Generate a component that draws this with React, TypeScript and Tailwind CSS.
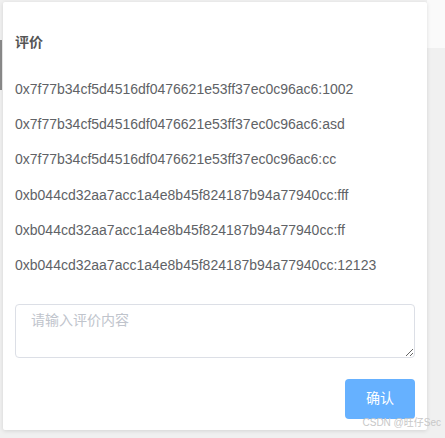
const ITEMS = [
  '0x7f77b34cf5d4516df0476621e53ff37ec0c96ac6:1002',
  '0x7f77b34cf5d4516df0476621e53ff37ec0c96ac6:asd',
  '0x7f77b34cf5d4516df0476621e53ff37ec0c96ac6:cc',
  '0xb044cd32aa7acc1a4e8b45f824187b94a77940cc:fff',
  '0xb044cd32aa7acc1a4e8b45f824187b94a77940cc:ff',
  '0xb044cd32aa7acc1a4e8b45f824187b94a77940cc:12123',
];

const FONT = { fontFamily: '"Liberation Sans", "Noto Sans CJK SC", sans-serif' };

export default function App() {
  return (
    <div
      className="relative h-[438px] w-[445px] overflow-hidden bg-[#f0f0f0]"
      style={FONT}
    >
      <div className="absolute right-0 top-0 h-[48px] w-[18px] bg-[#fafafa]" />
      <div className="absolute left-0 top-[40px] h-[50px] w-[2px] bg-[#8a8a8a]" />

      <div className="relative ml-[3px] mt-[2px] flex h-[428px] w-[424px] flex-col rounded-[2px] bg-white px-[12px] pt-[30px] shadow-[0_1px_4px_rgba(0,0,0,0.12)]">
        <h3 className="h-[20px] text-[14px] font-bold leading-[20px] text-[#555]">评价</h3>

        <ul className="mt-[19.5px]">
          {ITEMS.map((item) => (
            <li
              key={item}
              className="h-[35.4px] text-[14px] leading-[35.4px] text-[#606266]"
            >
              {item}
            </li>
          ))}
        </ul>

        <textarea
          rows={2}
          placeholder="请输入评价内容"
          className="mt-[20px] h-[54px] w-[400px] resize-y rounded-[4px] border border-[#dcdfe6] px-[15px] py-[5px] text-[14px] leading-[21px] text-[#606266] outline-none placeholder:text-[#c0c4cc]"
          style={FONT}
        />

        <div className="mt-[21px] flex w-[400px] justify-end">
          <button
            type="button"
            className="h-[40px] w-[70px] rounded-[4px] bg-[#66b1ff] text-[14px] text-white"
          >
            确认
          </button>
        </div>
      </div>

      <span className="absolute bottom-[8px] right-[4px] text-[10px] text-[#c8c8c8]">
        CSDN @旺仔Sec
      </span>
    </div>
  );
}
